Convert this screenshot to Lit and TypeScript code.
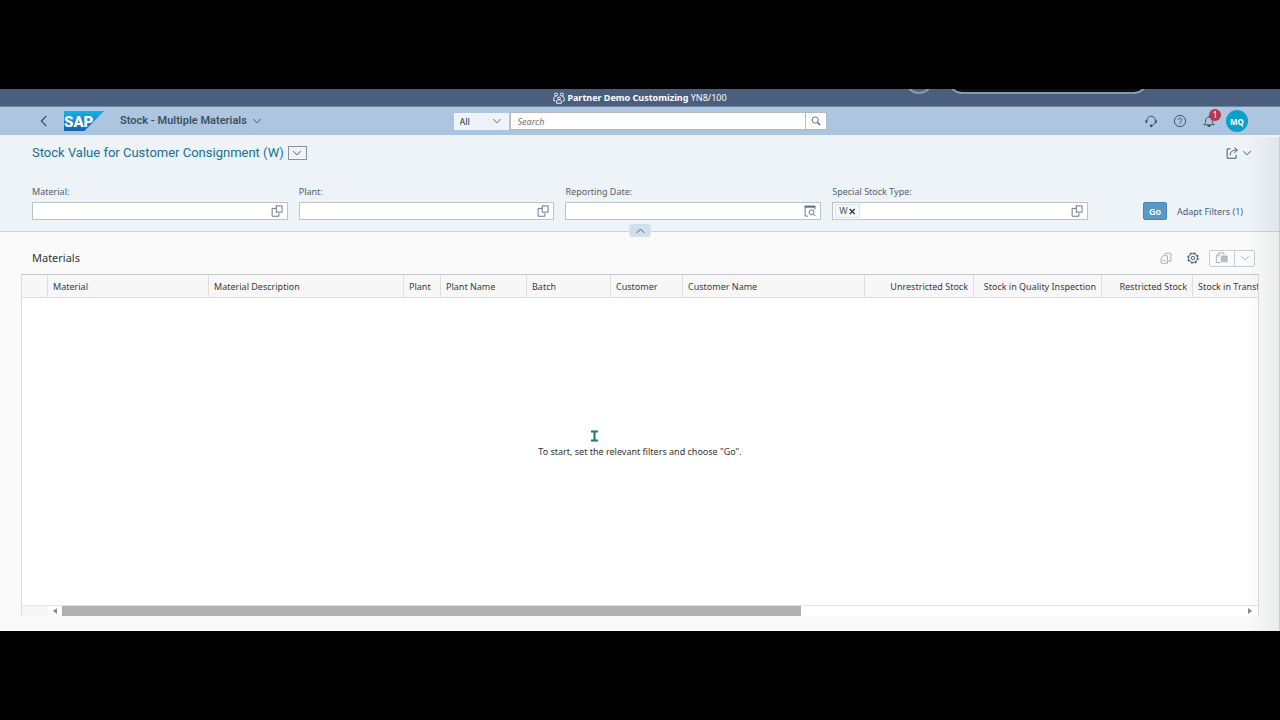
import { LitElement, html, css, svg } from "lit";
import { customElement, property, state } from "lit/decorators.js";

const glyphs: Record<string, unknown> = {
  back: svg`<path d="M11 1.500 4.500 8l6.500 6.500" stroke-width="1.600"/>`,
  down: svg`<path d="M3 5.500 8 10.500l5-5"/>`,
  up: svg`<path d="M3 10.500 8 5.500l5 5"/>`,
  search: svg`<circle cx="6.700" cy="6.500" r="5"/><path d="M10.500 10.200 14.500 14.500" stroke-width="2"/>`,
  headset: svg`<path d="M2.600 8.500V7.200a5.600 5.600 0 0 1 11.200 0v1.500c0 2.600-1.800 4.600-4.600 5.300"/><path d="M1.800 6.500v4M14.600 6.500v4" stroke-width="2"/><circle cx="8.300" cy="14.400" r="1.300" fill="currentColor"/>`,
  help: svg`<circle cx="8" cy="8" r="7.500"/><path d="M5.700 6.400a2.300 2.300 0 1 1 3.500 2c-.8.500-1.200.8-1.200 1.800M8 11.300v1.200"/>`,
  bell: svg`<path d="M1 13c1.900-.8 2.500-2.300 2.500-4.800 0-3.500 1.700-5.500 4.500-5.500s4.500 2 4.500 5.500c0 2.500.6 4 2.500 4.800zM8 2.700V1"/><path d="M6.200 14.200a1.900 1.900 0 0 0 3.600 0z" fill="currentColor"/>`,
  share: svg`<path d="M6 2.500H1.500v12.500h12V10.500"/><path d="M5.500 10.800c.2-4.300 2.500-6.600 9-6.600M11.300.8l3.800 3.400-3.800 3.400"/>`,
  valueHelp: svg`<path d="M7 4.500H1.500v10.500h9V11"/><rect x="7" y="1.200" width="7.800" height="8.300"/>`,
  calendar: svg`<path d="M5.500 14.800h-4v-13h13V6"/><path d="M1 2.200h14" stroke-width="2.600"/><circle cx="10" cy="9.700" r="3.300"/><path d="m12.500 12 3 3"/>`,
  close: svg`<path d="m3 3.500 9 9M12 3.500l-9 9" stroke-width="2.200"/>`,
  copy: svg`<path d="M1.500 8 4.500 5H10v10H1.500z"/><path d="M5.500 4.500V3.500L8 1.500h6.500v10.500H10.500M3.500 11.500h4"/>`,
  gear: svg`<circle cx="8" cy="8" r="5.800"/><circle cx="8" cy="8" r="2.300"/><circle cx="8" cy="8" r="6.900" stroke-width="1.600" stroke-dasharray="2.710 2.710"/>`,
  exportSheet: svg`<path d="M6 14H.5V4.500L4 1h6.500v3M4.200 1.500v3.500H1"/><rect x="6.500" y="5" width="9" height="8" fill="currentColor" stroke="none" fill-opacity=".7"/><path d="M6.500 5.500h9M6.500 8h9M6.500 10.500h9M6.500 13h9" stroke-width=".8"/>`,
  people: svg`<circle cx="4.200" cy="3.300" r="2"/><circle cx="11.800" cy="3.300" r="2"/><circle cx="8" cy="8.500" r="1.800"/><path d="M4.800 15v-2c0-1.700 1.200-2.700 3.200-2.700s3.200 1 3.200 2.700v2zM1.200 12V8.500c0-1.800 1-3 3-3M14.800 12V8.500c0-1.800-1-3-3-3M1.200 12h2M14.800 12h-2"/>`,
};

@customElement("ui-icon")
class UiIcon extends LitElement {
  static styles = css`
    :host { display: inline-flex; width: 12px; height: 12px; flex: none; }
    .glyph { width: 100%; height: 100%; fill: none; stroke: currentColor; stroke-width: 1.2; overflow: visible; }
  `;
  @property() name = "";
  render() {
    return html`<svg class="glyph" viewBox="0 0 16 16" aria-hidden="true">${glyphs[this.name]}</svg>`;
  }
}

@customElement("filter-field")
class FilterField extends LitElement {
  static styles = css`
    :host { display: block; min-width: 0; }
    .label { display: block; font-size: 9px; line-height: 14px; margin-bottom: 3px; color: #55606b; }
    .box { display: flex; align-items: center; height: 18px; box-sizing: border-box; border: 1px solid #bcc3ca; background: #fff; padding: 0 4px 0 2px; }
    .input { flex: 1; min-width: 0; height: 14px; border: 0; padding: 0 4px; outline: 0; background: none; font: inherit; font-size: 9px; }
    .token { display: flex; align-items: center; box-sizing: border-box; height: 14px; padding: 0 2px 0 3px; border: 1px solid #e2e2e2; background: #f7f7f7; font-size: 9px; line-height: 12px; color: #4a5561; }
    .btn { display: flex; border: 0; padding: 0; background: none; color: #5c6b7c; }
    .remove { display: flex; border: 0; padding: 0; background: none; color: #22303e; }
    .remove ui-icon { width: 9px; height: 9px; }
  `;
  @property() label = "";
  @property() icon = "valueHelp";
  @property() token = "";
  render() {
    return html`
      <label class="label" for="f">${this.label}:</label>
      <div class="box">
        ${this.token
          ? html`<span class="token">${this.token}<button class="remove" aria-label="Remove" @click=${() => (this.token = "")}><ui-icon name="close"></ui-icon></button></span>`
          : null}
        <input class="input" id="f" type="text" />
        <button class="btn" aria-label="Open value help"><ui-icon name=${this.icon}></ui-icon></button>
      </div>
    `;
  }
}

interface Column { title: string; width: number; end?: boolean }

const columns: Column[] = [
  { title: "", width: 26 },
  { title: "Material", width: 161 },
  { title: "Material Description", width: 195 },
  { title: "Plant", width: 37 },
  { title: "Plant Name", width: 86 },
  { title: "Batch", width: 84 },
  { title: "Customer", width: 72 },
  { title: "Customer Name", width: 182 },
  { title: "Unrestricted Stock", width: 109, end: true },
  { title: "Stock in Quality Inspection", width: 128, end: true },
  { title: "Restricted Stock", width: 91, end: true },
  { title: "Stock in Transfer", width: 110 },
];

@customElement("app-root")
class AppRoot extends LitElement {
  static styles = css`
    :host { display: flex; flex-direction: column; min-height: 100vh; box-sizing: border-box; padding: 89px 0; background: #000; font-family: "Noto Sans", "Open Sans", sans-serif; font-size: 9px; color: #333; }
    button, input, select { font-family: inherit; }
    button { cursor: pointer; }
    .app { position: relative; flex: 1; display: flex; flex-direction: column; background: #fafafa; overflow: hidden; }
    .system { position: relative; height: 17px; display: flex; align-items: center; justify-content: center; gap: 2px; background: #4b5e7d; border-bottom: 1px solid #7088a8; color: #fff; line-height: 17px; overflow: hidden; }
    .remnant { position: absolute; top: -23px; height: 24px; width: 24px; border: 2px solid #8b97aa; border-radius: 14px; background: #4f6080; right: 347px; }
    .pill { right: 132px; width: 196px; background: #0d1016; }
    .shell { display: flex; align-items: center; height: 28px; padding: 0 32px; background: linear-gradient(#b0c6e0, #aac4df); }
    .side { flex: 1; display: flex; align-items: center; min-width: 0; }
    .side-end { justify-content: flex-end; }
    .plain { display: flex; align-items: center; border: 0; padding: 0; background: none; color: #34495f; }
    .back { margin-left: 6px; }
    .logo { display: flex; margin: 0 16px 0 14px; }
    .logo-art { width: 40px; height: 20px; }
    .logo-text { font-family: Roboto, sans-serif; font-weight: 900; font-size: 15px; fill: #fff; }
    .app-title { gap: 4px; font-family: Roboto, "Noto Sans", sans-serif; font-size: 11px; line-height: 16px; font-weight: 600; color: #3d5166; }
    .search { display: flex; align-items: center; width: 373px; gap: 1px; }
    .scope { position: relative; display: flex; align-items: center; width: 55px; height: 17px; background: #edf3f8; }
    .scope-select { appearance: none; width: 100%; height: 100%; border: 0; background: none; padding: 0 6px; font-size: 9px; color: #26323e; }
    .scope-icon { position: absolute; right: 6px; color: #52677c; pointer-events: none; }
    .query { flex: 1; display: flex; height: 18px; border: 1px solid #b3bac1; background: #fff; box-sizing: border-box; }
    .query-input { flex: 1; min-width: 0; border: 0; outline: 0; padding: 0 7px; font-size: 9px; background: none; }
    .query-input::placeholder { color: #6d7379; font-style: italic; }
    .query-btn { width: 21px; justify-content: center; border-left: 1px solid #b3bac1; }
    .query-btn ui-icon { width: 10px; height: 10px; }
    .tools { display: flex; align-items: center; gap: 17px; }
    .bell { position: relative; }
    .badge { position: absolute; left: 6px; top: -6px; width: 12px; height: 12px; border-radius: 50%; background: #b8364c; color: #fff; font-size: 8px; line-height: 12px; text-align: center; }
    .avatar { width: 22px; height: 22px; border: 0; border-radius: 50%; padding: 0; background: #0c9fcb; color: #fff; font-size: 8px; font-weight: 700; margin-left: -6px; }
    .head { position: relative; padding: 8px 32px 11px; background: #edf3f7; border-bottom: 1px solid #c5d5e3; }
    .title-row { display: flex; align-items: center; gap: 4px; height: 20px; margin-bottom: 22px; margin-right: -5px; }
    .title { margin: 0; font-family: Roboto, "Noto Sans", sans-serif; font-size: 13px; line-height: 20px; font-weight: 400; color: #206f94; }
    .variant { width: 19px; height: 14px; justify-content: center; border: 1px solid #87929d; box-sizing: border-box; }
    .share { margin-left: auto; gap: 3px; }
    .filters { display: flex; align-items: flex-end; gap: 55px; }
    .fields { flex: 1; display: grid; grid-template-columns: repeat(4, 1fr); gap: 11px; }
    .actions { display: flex; }
    .go { height: 18px; width: 24px; border: 1px solid #4686b8; border-radius: 2px; padding: 0; background: #5899c8; color: #fff; font-size: 9px; font-weight: 600; }
    .adapt { height: 18px; border: 0; padding: 0 5px 0 10px; background: none; font-size: 9px; color: #45607c; }
    .collapse { position: absolute; left: 50%; bottom: -6px; transform: translateX(-50%); width: 21px; height: 13px; justify-content: center; border-radius: 2px; background: #d0dfec; }
    .content { flex: 1; display: flex; flex-direction: column; padding: 16px 21px 15px; }
    .toolbar { display: flex; align-items: center; height: 20px; padding: 0 4px 0 11px; margin-bottom: 6px; }
    .table-title { flex: 1; margin: 0; font-size: 11px; line-height: 20px; font-weight: 400; color: #333; }
    .toolbar-icons { display: flex; align-items: center; gap: 15px; }
    .muted { color: #9dabb9; }
    .gear { color: #42566b; }
    .split { display: flex; margin-left: -5px; height: 17px; box-sizing: border-box; border: 1px solid #c5ced6; border-radius: 2px; }
    .split-main { width: 24px; justify-content: center; }
    .split-arrow { width: 20px; justify-content: center; border-left: 1px solid #c5ced6; }
    .grid { flex: 1; display: flex; flex-direction: column; border: 1px solid #dcdcdc; border-top-color: #c4c6c8; border-bottom: 0; background: #fff; overflow: hidden; }
    .table { table-layout: fixed; border-collapse: separate; border-spacing: 0; background: #f7f7f7; }
    .table th { box-sizing: border-box; height: 23px; padding: 2px 5px 0; border-right: 1px solid #dedede; border-bottom: 1px solid #dedede; text-align: left; font-weight: 400; line-height: 14px; white-space: nowrap; color: #3a3a3a; }
    .table .end { text-align: right; }
    .empty { position: relative; flex: 1; display: flex; align-items: center; justify-content: center; line-height: 14px; }
    .caret { position: absolute; left: calc(50% - 50px); top: calc(50% - 22px); width: 9px; height: 12px; }
    .scroll { display: flex; align-items: center; height: 10px; border-top: 1px solid #e3e3e3; }
    .scroll-pad { width: 26px; height: 100%; background: #f6f6f6; }
    .arrow { width: 14px; height: 8px; fill: #8a8a8a; }
    .track { flex: 1; height: 100%; }
    .thumb { width: 62.5%; height: 100%; background: #b0b0b0; }
    .shade { position: absolute; top: 48px; right: 0; bottom: 0; width: 34px; pointer-events: none; background: linear-gradient(to right, transparent, rgba(70, 80, 90, .08)); border-right: 1px solid #c9cdd1; box-sizing: border-box; }
  `;

  @state() private expanded = true;

  render() {
    return html`
      <main class="app">
        <div class="system">
          <ui-icon name="people"></ui-icon>
          <span><b>Partner Demo Customizing</b> YN8/100</span>
          <i class="remnant"></i><i class="remnant pill"></i>
        </div>
        <header class="shell">
          <div class="side">
            <button class="plain back" aria-label="Back"><ui-icon name="back"></ui-icon></button>
            <a class="logo" href="#" aria-label="Home">
              <svg class="logo-art" viewBox="0 0 40 20">
                <defs><linearGradient id="g" x1="0" y1="0" x2="0" y2="1"><stop offset="0" stop-color="#14b2e4"/><stop offset="1" stop-color="#1c5fae"/></linearGradient></defs>
                <path d="M0 0h40L20.500 20H0z" fill="url(#g)"/>
                <text class="logo-text" x="0" y="16">SAP</text>
              </svg>
            </a>
            <button class="plain app-title">Stock - Multiple Materials<ui-icon name="down"></ui-icon></button>
          </div>
          <div class="search">
            <div class="scope">
              <select class="scope-select" aria-label="Search scope"><option>All</option></select>
              <ui-icon class="scope-icon" name="down"></ui-icon>
            </div>
            <div class="query">
              <input class="query-input" type="text" placeholder="Search" aria-label="Search" />
              <button class="plain query-btn" aria-label="Search"><ui-icon name="search"></ui-icon></button>
            </div>
          </div>
          <div class="side side-end">
            <div class="tools">
              <button class="plain" aria-label="Support"><ui-icon name="headset"></ui-icon></button>
              <button class="plain" aria-label="Help"><ui-icon name="help"></ui-icon></button>
              <button class="plain bell" aria-label="Notifications"><ui-icon name="bell"></ui-icon><span class="badge">1</span></button>
              <button class="avatar">MQ</button>
            </div>
          </div>
        </header>
        <section class="head">
          <div class="title-row">
            <h1 class="title">Stock Value for Customer Consignment (W)</h1>
            <button class="plain variant" aria-label="Select view"><ui-icon name="down"></ui-icon></button>
            <button class="plain share" aria-label="Share"><ui-icon name="share"></ui-icon><ui-icon name="down"></ui-icon></button>
          </div>
          ${this.expanded
            ? html`<div class="filters">
                <div class="fields">
                  <filter-field label="Material"></filter-field>
                  <filter-field label="Plant"></filter-field>
                  <filter-field label="Reporting Date" icon="calendar"></filter-field>
                  <filter-field label="Special Stock Type" token="W"></filter-field>
                </div>
                <div class="actions">
                  <button class="go">Go</button>
                  <button class="adapt">Adapt Filters (1)</button>
                </div>
              </div>`
            : null}
          <button class="plain collapse" aria-label="Toggle header" @click=${() => (this.expanded = !this.expanded)}>
            <ui-icon name="up"></ui-icon>
          </button>
        </section>
        <section class="content">
          <div class="toolbar">
            <h2 class="table-title">Materials</h2>
            <div class="toolbar-icons">
              <button class="plain muted" aria-label="Copy"><ui-icon name="copy"></ui-icon></button>
              <button class="plain gear" aria-label="Settings"><ui-icon name="gear"></ui-icon></button>
              <div class="split">
                <button class="plain split-main muted" aria-label="Export"><ui-icon name="exportSheet"></ui-icon></button>
                <button class="plain split-arrow muted" aria-label="Export options"><ui-icon name="down"></ui-icon></button>
              </div>
            </div>
          </div>
          <div class="grid">
            <table class="table" style="width:${columns.reduce((sum, c) => sum + c.width, 0)}px">
              <colgroup>${columns.map((c) => html`<col style="width:${c.width}px" />`)}</colgroup>
              <thead>
                <tr>${columns.map((c) => html`<th class=${c.end ? "end" : ""} scope="col">${c.title}</th>`)}</tr>
              </thead>
            </table>
            <div class="empty">
              To start, set the relevant filters and choose "Go".
              <svg class="caret" viewBox="0 0 9 12"><path d="M1 1.500h7M1 10.500h7M4.500 1v10" stroke="#1f7a60" stroke-width="2" fill="none"/></svg>
            </div>
            <div class="scroll">
              <span class="scroll-pad"></span>
              <svg class="arrow" viewBox="0 0 14 8"><path d="M9 1v6L5 4z"/></svg>
              <div class="track"><div class="thumb"></div></div>
              <svg class="arrow" viewBox="0 0 14 8"><path d="M4 1v6l4-3z"/></svg>
            </div>
          </div>
        </section>
        <div class="shade"></div>
      </main>
    `;
  }
}
